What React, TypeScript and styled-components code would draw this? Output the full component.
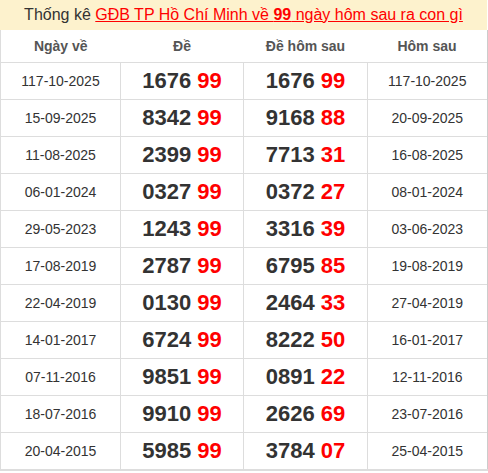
import styled, { createGlobalStyle } from 'styled-components';

const GlobalStyle = createGlobalStyle`
  body {
    margin: 0;
    background: #fff;
    font-family: "Liberation Sans", Arial, sans-serif;
  }
`;

const Wrapper = styled.div`
  width: 487px;
`;

const Title = styled.div`
  height: 30px;
  line-height: 30px;
  background: #fdf2cd;
  text-align: center;
  font-size: 16px;
  color: #333;
  white-space: nowrap;
`;

const TitleLink = styled.a`
  color: #f00;
  text-decoration: underline;
`;

const Table = styled.table`
  width: 487px;
  border-collapse: collapse;
  table-layout: fixed;
  border-left: 1px solid #ddd;
  border-right: 2px solid #ccc;
  border-bottom: 2px solid #ddd;
`;

const Th = styled.th`
  height: 32px;
  font-size: 14px;
  font-weight: bold;
  color: #555;
  text-align: center;
  padding: 0;
  border-bottom: 1px solid #ddd;
`;

const Td = styled.td`
  height: 36px;
  padding: 0;
  text-align: center;
  border: 1px solid #ddd;
  border-top: none;
  &:first-child {
    border-left: none;
  }
  &:last-child {
    border-right: none;
  }
`;

const DateText = styled.span`
  font-size: 14px;
  color: #333;
`;

const Number = styled.span`
  font-size: 22px;
  font-weight: bold;
  color: #333;
`;

const Tail = styled.span`
  color: #f00;
`;

type Row = [string, string, string, string, string];

const rows: Row[] = [
  ['117-10-2025', '1676', '1676', '99', '117-10-2025'],
  ['15-09-2025', '8342', '9168', '88', '20-09-2025'],
  ['11-08-2025', '2399', '7713', '31', '16-08-2025'],
  ['06-01-2024', '0327', '0372', '27', '08-01-2024'],
  ['29-05-2023', '1243', '3316', '39', '03-06-2023'],
  ['17-08-2019', '2787', '6795', '85', '19-08-2019'],
  ['22-04-2019', '0130', '2464', '33', '27-04-2019'],
  ['14-01-2017', '6724', '8222', '50', '16-01-2017'],
  ['07-11-2016', '9851', '0891', '22', '12-11-2016'],
  ['18-07-2016', '9910', '2626', '69', '23-07-2016'],
  ['20-04-2015', '5985', '3784', '07', '25-04-2015'],
];

function Lotto({ head, tail }: { head: string; tail: string }) {
  return (
    <Number>
      {head} <Tail>{tail}</Tail>
    </Number>
  );
}

export default function App() {
  return (
    <>
      <GlobalStyle />
      <Wrapper>
        <Title>
          Thống kê{' '}
          <TitleLink href="#">
            GĐB TP Hồ Chí Minh về <b>99</b> ngày hôm sau ra con gì
          </TitleLink>
        </Title>
        <Table>
          <colgroup>
            <col style={{ width: 120 }} />
            <col style={{ width: 123 }} />
            <col style={{ width: 124 }} />
            <col style={{ width: 120 }} />
          </colgroup>
          <thead>
            <tr>
              <Th>Ngày về</Th>
              <Th>Đề</Th>
              <Th>Đề hôm sau</Th>
              <Th>Hôm sau</Th>
            </tr>
          </thead>
          <tbody>
            {rows.map(([d1, a, b, t, d2]) => (
              <tr key={d1 + a}>
                <Td>
                  <DateText>{d1}</DateText>
                </Td>
                <Td>
                  <Lotto head={a} tail="99" />
                </Td>
                <Td>
                  <Lotto head={b} tail={t} />
                </Td>
                <Td>
                  <DateText>{d2}</DateText>
                </Td>
              </tr>
            ))}
          </tbody>
        </Table>
      </Wrapper>
    </>
  );
}
